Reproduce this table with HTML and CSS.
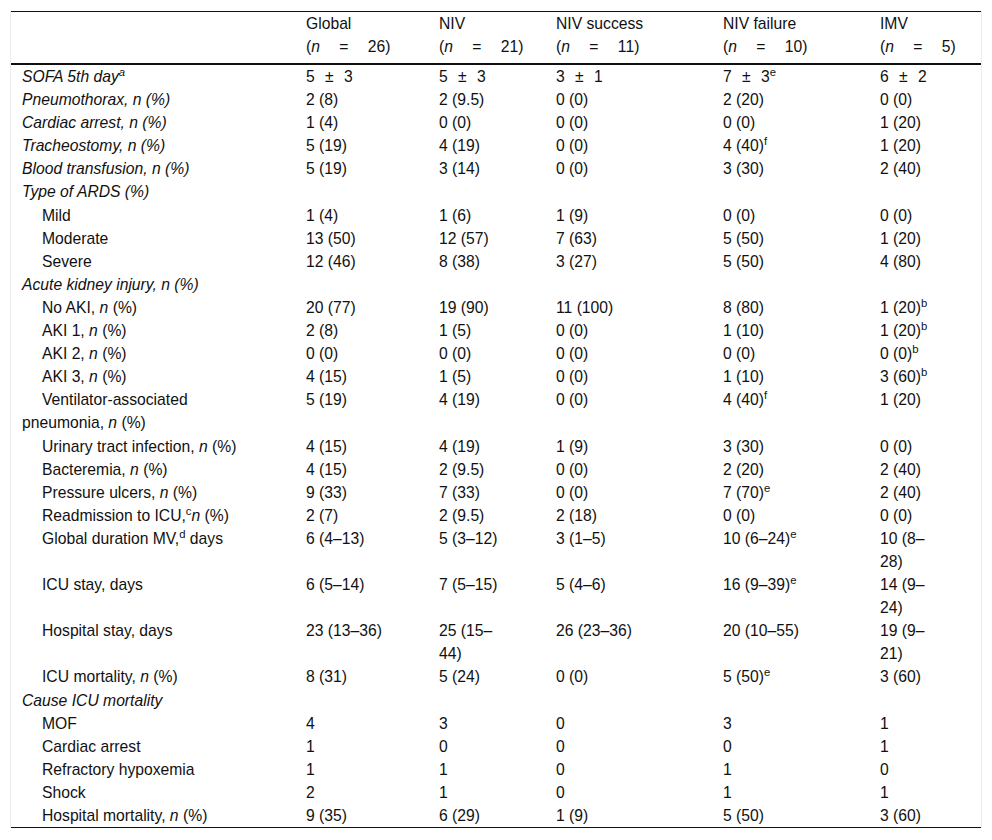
FILE: index.html
```html
<!DOCTYPE html>
<html lang="en">
<head>
<meta charset="utf-8">
<title>Table</title>
<link rel="stylesheet" href="styles.css">
</head>
<body>
<div class="wrap">
<table class="data">
<colgroup>
<col class="c1"><col class="c2"><col class="c3"><col class="c4"><col class="c5"><col class="c6">
</colgroup>
<thead>
<tr>
<th></th>
<th>Global<br><span class="nn">(<i>n</i> = 26)</span></th>
<th>NIV<br><span class="nn">(<i>n</i> = 21)</span></th>
<th>NIV success<br><span class="nn">(<i>n</i> = 11)</span></th>
<th>NIV failure<br><span class="nn">(<i>n</i> = 10)</span></th>
<th>IMV<br><span class="nn">(<i>n</i> = 5)</span></th>
</tr>
</thead>
<tbody>
<tr><td class="cat">SOFA 5th day<sup>a</sup></td><td class="pm">5 ± 3</td><td class="pm">5 ± 3</td><td class="pm">3 ± 1</td><td class="pm">7 ± 3<sup>e</sup></td><td class="pm">6 ± 2</td></tr>
<tr><td class="cat">Pneumothorax, n (%)</td><td>2 (8)</td><td>2 (9.5)</td><td>0 (0)</td><td>2 (20)</td><td>0 (0)</td></tr>
<tr><td class="cat">Cardiac arrest, n (%)</td><td>1 (4)</td><td>0 (0)</td><td>0 (0)</td><td>0 (0)</td><td>1 (20)</td></tr>
<tr><td class="cat">Tracheostomy, n (%)</td><td>5 (19)</td><td>4 (19)</td><td>0 (0)</td><td>4 (40)<sup>f</sup></td><td>1 (20)</td></tr>
<tr><td class="cat">Blood transfusion, n (%)</td><td>5 (19)</td><td>3 (14)</td><td>0 (0)</td><td>3 (30)</td><td>2 (40)</td></tr>
<tr><td class="cat">Type of ARDS (%)</td><td></td><td></td><td></td><td></td><td></td></tr>
<tr><td class="sub">Mild</td><td>1 (4)</td><td>1 (6)</td><td>1 (9)</td><td>0 (0)</td><td>0 (0)</td></tr>
<tr><td class="sub">Moderate</td><td>13 (50)</td><td>12 (57)</td><td>7 (63)</td><td>5 (50)</td><td>1 (20)</td></tr>
<tr><td class="sub">Severe</td><td>12 (46)</td><td>8 (38)</td><td>3 (27)</td><td>5 (50)</td><td>4 (80)</td></tr>
<tr><td class="cat">Acute kidney injury, n (%)</td><td></td><td></td><td></td><td></td><td></td></tr>
<tr><td class="sub">No AKI, <i>n</i> (%)</td><td>20 (77)</td><td>19 (90)</td><td>11 (100)</td><td>8 (80)</td><td>1 (20)<sup>b</sup></td></tr>
<tr><td class="sub">AKI 1, <i>n</i> (%)</td><td>2 (8)</td><td>1 (5)</td><td>0 (0)</td><td>1 (10)</td><td>1 (20)<sup>b</sup></td></tr>
<tr><td class="sub">AKI 2, <i>n</i> (%)</td><td>0 (0)</td><td>0 (0)</td><td>0 (0)</td><td>0 (0)</td><td>0 (0)<sup>b</sup></td></tr>
<tr><td class="sub">AKI 3, <i>n</i> (%)</td><td>4 (15)</td><td>1 (5)</td><td>0 (0)</td><td>1 (10)</td><td>3 (60)<sup>b</sup></td></tr>
<tr><td class="sub">Ventilator-associated pneumonia, <i>n</i> (%)</td><td>5 (19)</td><td>4 (19)</td><td>0 (0)</td><td>4 (40)<sup>f</sup></td><td>1 (20)</td></tr>
<tr><td class="sub">Urinary tract infection, <i>n</i> (%)</td><td>4 (15)</td><td>4 (19)</td><td>1 (9)</td><td>3 (30)</td><td>0 (0)</td></tr>
<tr><td class="sub">Bacteremia, <i>n</i> (%)</td><td>4 (15)</td><td>2 (9.5)</td><td>0 (0)</td><td>2 (20)</td><td>2 (40)</td></tr>
<tr><td class="sub">Pressure ulcers, <i>n</i> (%)</td><td>9 (33)</td><td>7 (33)</td><td>0 (0)</td><td>7 (70)<sup>e</sup></td><td>2 (40)</td></tr>
<tr><td class="sub">Readmission to ICU,<sup>c</sup><i>n</i> (%)</td><td>2 (7)</td><td>2 (9.5)</td><td>2 (18)</td><td>0 (0)</td><td>0 (0)</td></tr>
<tr><td class="sub">Global duration MV,<sup>d</sup> days</td><td>6 (4–13)</td><td>5 (3–12)</td><td>3 (1–5)</td><td>10 (6–24)<sup>e</sup></td><td>10 (8–28)</td></tr>
<tr><td class="sub">ICU stay, days</td><td>6 (5–14)</td><td>7 (5–15)</td><td>5 (4–6)</td><td>16 (9–39)<sup>e</sup></td><td>14 (9–24)</td></tr>
<tr><td class="sub">Hospital stay, days</td><td>23 (13–36)</td><td>25 (15–44)</td><td>26 (23–36)</td><td>20 (10–55)</td><td>19 (9–21)</td></tr>
<tr><td class="sub">ICU mortality, <i>n</i> (%)</td><td>8 (31)</td><td>5 (24)</td><td>0 (0)</td><td>5 (50)<sup>e</sup></td><td>3 (60)</td></tr>
<tr><td class="cat">Cause ICU mortality</td><td></td><td></td><td></td><td></td><td></td></tr>
<tr><td class="sub">MOF</td><td>4</td><td>3</td><td>0</td><td>3</td><td>1</td></tr>
<tr><td class="sub">Cardiac arrest</td><td>1</td><td>0</td><td>0</td><td>0</td><td>1</td></tr>
<tr><td class="sub">Refractory hypoxemia</td><td>1</td><td>1</td><td>0</td><td>1</td><td>0</td></tr>
<tr><td class="sub">Shock</td><td>2</td><td>1</td><td>0</td><td>1</td><td>1</td></tr>
<tr><td class="sub">Hospital mortality, <i>n</i> (%)</td><td>9 (35)</td><td>6 (29)</td><td>1 (9)</td><td>5 (50)</td><td>3 (60)</td></tr>
</tbody>
</table>
</div>
</body>
</html>
```

FILE: styles.css
```css
html, body {
  background: #ffffff;
}

body {
  margin: 11px 10px 0 10px;
  font-family: "Liberation Sans", Arial, sans-serif;
  font-size: 15.7px;
  color: #111111;
}

.wrap {
  border-left: 1px solid #ececec;
  border-right: 1px solid #ececec;
}

.data {
  width: 100%;
  table-layout: fixed;
  border-collapse: collapse;
  border-top: 1px solid #111111;
  border-bottom: 1px solid #111111;
  line-height: 23.1px;
}

.c1 { width: 284px; }
.c2 { width: 133px; }
.c3 { width: 117px; }
.c4 { width: 167px; }
.c5 { width: 157px; }
.c6 { width: 112px; }

.data th {
  font-weight: normal;
  text-align: left;
  vertical-align: top;
  padding: 0 0 5px 11px;
  white-space: nowrap;
  border-bottom: 2px solid #111111;
  line-height: 23px;
}

.data td {
  text-align: left;
  vertical-align: top;
  padding: 0 8px 0 11px;
}

.data tbody tr:first-child td {
  padding-top: 0;
}

.data td:nth-child(1) { padding-right: 40px; }
.data td:nth-child(3) { padding-right: 41px; }
.data td:nth-child(6) { padding-right: 46px; }

.nn {
  word-spacing: 15px;
}

.pm {
  word-spacing: 6px;
}

.cat {
  font-style: italic;
}

.sub {
  text-indent: 20px;
}

sup {
  font-size: 0.72em;
  line-height: 0;
  vertical-align: 0.55em;
}
```
